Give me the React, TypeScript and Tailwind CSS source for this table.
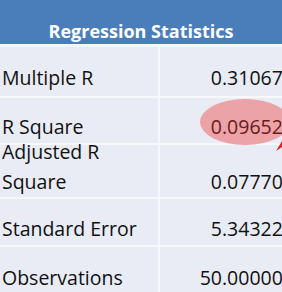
import React from "react";

type Row = {
  label: React.ReactNode;
  value: string;
  h: string;
  pad: string;
  highlight?: boolean;
  leading: string;
};

const rows: Row[] = [
  { label: "Multiple R", value: "0.310677", h: "h-[49px]", pad: "items-start pt-[18px]", leading: "leading-[26px]" },
  { label: "R Square", value: "0.096520", h: "h-[45px]", pad: "items-start pt-[16px]", highlight: true, leading: "leading-[26px]" },
  { label: <>Adjusted R<br />Square</>, value: "0.077700", h: "h-[52px]", pad: "items-end pb-[0px]", leading: "leading-[30px]" },
  { label: "Standard Error", value: "5.343220", h: "h-[46px]", pad: "items-start pt-[17px]", leading: "leading-[26px]" },
  { label: "Observations", value: "50.000000", h: "h-[50px]", pad: "items-start pt-[18px]", leading: "leading-[26px]" },
];

export default function App() {
  return (
    <div
      className="relative w-[282px] h-[292px] overflow-hidden bg-[#e9ecf5]"
      style={{ fontFamily: "'Open Sans', Lato, sans-serif" }}
    >
      <div className="w-[300px] flex flex-col">
        <div className="h-[47px] bg-[#4a7ebb] flex items-start justify-center pt-[19px] pr-[18px] border-b-[3px] border-[#f4f6fa]">
          <span className="text-white font-bold text-[18px] leading-[24px]">Regression Statistics</span>
        </div>
        {rows.map((r, i) => (
          <div
            key={i}
            className={`flex ${i < rows.length - 1 ? "border-b-2 border-[#f6f8fc] box-content" : ""} ${r.h}`}
          >
            <div className={`w-[160px] shrink-0 border-r-2 border-[#f6f8fc] flex ${r.pad} pl-[2px] text-[19.5px] ${r.leading} text-[#111111]`}>
              <span>{r.label}</span>
            </div>
            <div className={`flex-1 relative flex ${r.pad} justify-end pr-[6px] text-[19.5px] ${r.leading}`}>
              {r.highlight && (
                <div className="absolute left-[40px] top-[1px] w-[90px] h-[46px] rounded-[50%] bg-[#eba3a7]" />
              )}
              <span className={`relative ${r.highlight ? "text-[#6b1a1a]" : "text-[#111111]"}`}>{r.value}</span>
            </div>
          </div>
        ))}
      </div>
      <svg className="absolute left-[275px] top-[139px]" width="8" height="14" viewBox="0 0 8 14">
        <polygon points="1,12 7,2 7,8" fill="#e0202a" />
      </svg>
    </div>
  );
}
